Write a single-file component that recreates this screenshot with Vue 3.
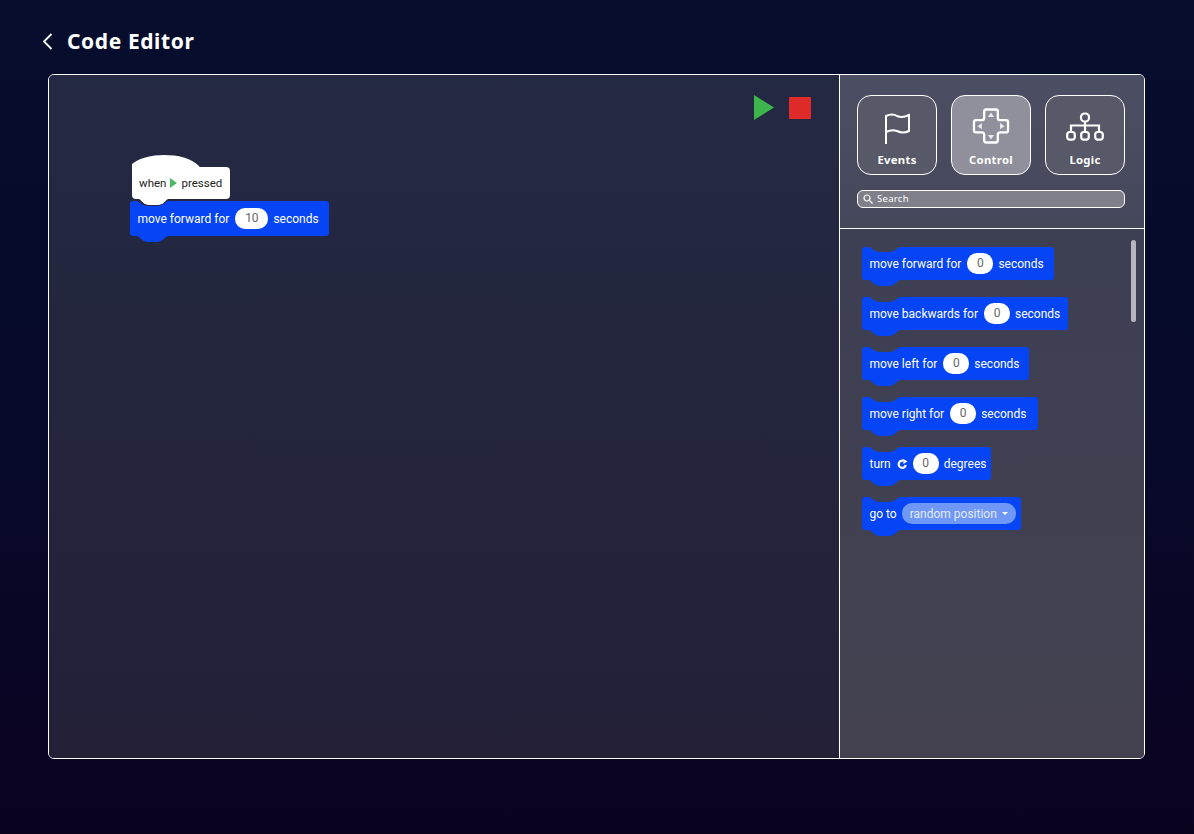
<script setup>
const tabs = [
  { name: 'Events', icon: 'flag' },
  { name: 'Control', icon: 'pad', active: true },
  { name: 'Logic', icon: 'tree' },
]

const blocks = [
  { before: 'move forward for', value: '0', after: 'seconds', width: 192 },
  { before: 'move backwards for', value: '0', after: 'seconds', width: 206 },
  { before: 'move left for', value: '0', after: 'seconds', width: 167 },
  { before: 'move right for', value: '0', after: 'seconds', width: 176 },
  { before: 'turn', turn: true, value: '0', after: 'degrees', width: 129 },
  { before: 'go to', select: 'random position', width: 159 },
]
</script>

<template>
  <div class="page">
    <header class="top">
      <svg class="back" width="11" height="17" viewBox="0 0 11 17">
        <path d="M9.5 1 L2 8.5 L9.5 16" fill="none" stroke="#fff" stroke-width="1.8" />
      </svg>
      <h1>Code Editor</h1>
    </header>

    <main class="editor">
      <section class="canvas">
        <div class="controls">
          <svg width="20" height="25" viewBox="0 0 20 25"><path d="M0 0 L20 12.5 L0 25 Z" fill="#3cb54a" /></svg>
          <span class="stop"></span>
        </div>

        <div class="stack">
          <div class="hat">
            <svg class="dome" width="68" height="13" viewBox="0 0 68 13"><path d="M0 13 V9 C7 3 20 0 32 0 C46 0 59 3 67 11 L68 13 Z" fill="#fff" /></svg>
            <span>when</span>
            <svg width="7" height="10" viewBox="0 0 7 10"><path d="M0 0 L7 5 L0 10 Z" fill="#4cb860" /></svg>
            <span>pressed</span>
          </div>
          <div class="block block-canvas">
            <span>move forward for</span>
            <span class="pill wide">10</span>
            <span>seconds</span>
          </div>
        </div>
      </section>

      <aside class="side">
        <div class="side-head">
          <div class="tabs">
            <button v-for="tab in tabs" :key="tab.name" class="tab" :class="{ active: tab.active }">
              <svg v-if="tab.icon === 'flag'" width="27" height="31" viewBox="0 0 27 31" fill="none" stroke="#fff" stroke-width="2">
                <path d="M2 31 V3 C6 1 10 1 13 3 C17 5 21 4 25 2 V18 C21 20 17 20 13 18 C10 17 6 17 2 19" />
              </svg>
              <svg v-else-if="tab.icon === 'pad'" width="38" height="36" viewBox="0 0 38 37" fill="none">
                <path d="M14 1.5 H24 Q26 1.5 26 3.5 V10 Q26 12.5 28.5 12.5 H34.5 Q36.5 12.5 36.5 14.5 V23 Q36.5 25 34.5 25 H28.5 Q26 25 26 27.5 V33.5 Q26 35.5 24 35.5 H14 Q12 35.5 12 33.5 V27.5 Q12 25 9.5 25 H3.5 Q1.5 25 1.5 23 V14.5 Q1.5 12.5 3.5 12.5 H9.5 Q12 12.5 12 10 V3.5 Q12 1.5 14 1.5 Z" stroke="#fff" stroke-width="2.4" />
                <path d="M19 4.5 L22.2 9.2 H15.8 Z M19 32.5 L15.8 27.8 H22.2 Z M5 18.7 L9.7 15.5 V21.9 Z M33 18.7 L28.3 21.9 V15.5 Z" fill="#e8e8ee" />
              </svg>
              <svg v-else width="38" height="36" viewBox="0 0 38 36" fill="none" stroke="#fff" stroke-width="2.2">
                <rect x="15" y="5.5" width="8" height="8" rx="3.6" />
                <path d="M19 13.5 V23 M5 23 V17.5 H33 V23" />
                <rect x="1.2" y="24" width="7.6" height="7.6" rx="2.6" />
                <rect x="15.2" y="24" width="7.6" height="7.6" rx="2.6" />
                <rect x="29.2" y="24" width="7.6" height="7.6" rx="2.6" />
              </svg>
              <span>{{ tab.name }}</span>
            </button>
          </div>
          <div class="search">
            <svg width="10" height="10" viewBox="0 0 10 10" fill="none" stroke="#fff" stroke-width="1.2">
              <circle cx="4" cy="4" r="3" />
              <path d="M6.2 6.2 L9.5 9.5" />
            </svg>
            <span>Search</span>
          </div>
        </div>

        <div class="palette">
          <div v-for="b in blocks" :key="b.before" class="block" :style="{ width: b.width + 'px' }">
            <span>{{ b.before }}</span>
            <svg v-if="b.turn" class="turn" width="11" height="10" viewBox="0 0 11 10" fill="none">
              <path d="M8.8 6 A3.6 3.6 0 1 1 6 1.7" stroke="#fff" stroke-width="2.2" />
              <path d="M6 0 L10.5 2.2 L6.5 5 Z" fill="#fff" />
            </svg>
            <span v-if="b.value" class="pill">{{ b.value }}</span>
            <span v-if="b.after">{{ b.after }}</span>
            <span v-if="b.select" class="select">
              {{ b.select }}
              <i class="caret"></i>
            </span>
          </div>
          <span class="scrollbar"></span>
        </div>
      </aside>
    </main>
  </div>
</template>

<style>
body {
  margin: 0;
  background: #0a0320;
}
</style>

<style scoped>
.page {
  box-sizing: border-box;
  width: 1194px;
  height: 834px;
  padding: 26px 49px 0 48px;
  overflow: hidden;
  background: linear-gradient(180deg, #060d2d 0%, #070a2a 50%, #0b0220 100%);
  font-family: Roboto, "Liberation Sans", sans-serif;
}
.top {
  display: flex;
  align-items: center;
  height: 30px;
  margin: 0 0 18px -6px;
  gap: 14px;
}
.top h1 {
  margin: 0;
  color: #fff;
  font-family: "Noto Sans", sans-serif;
  font-size: 21px;
  font-weight: 700;
  letter-spacing: 0.6px;
}
.editor {
  display: flex;
  height: 685px;
  box-sizing: border-box;
  border: 1px solid #fff;
  border-radius: 6px;
  overflow: hidden;
}
.canvas {
  position: relative;
  width: 790px;
  flex: none;
  border-right: 1px solid #fff;
  background: linear-gradient(180deg, #242943 0%, #232038 100%);
}
.controls {
  display: flex;
  justify-content: flex-end;
  align-items: center;
  gap: 15px;
  padding: 20px 28px 0 0;
}
.stop {
  width: 22px;
  height: 22px;
  background: #e02b2b;
}
.stack {
  position: absolute;
  left: 81px;
  top: 92px;
}
.hat {
  position: relative;
  display: flex;
  align-items: center;
  gap: 4px;
  box-sizing: border-box;
  width: 98px;
  height: 32px;
  margin-left: 2px;
  padding: 0 0 1px 7px;
  border-radius: 0 4px 4px 4px;
  background: #fff;
  color: #222;
  font-size: 11.5px;
}
.dome {
  position: absolute;
  left: 0;
  top: -12px;
}
.hat::after {
  content: '';
  position: absolute;
  z-index: 2;
  left: 7px;
  bottom: -6px;
  width: 29px;
  height: 6px;
  background: #fff;
  clip-path: path('M0 0 H29 C26 2 24 6 19 6 H10 C5 6 3 2 0 0 Z');
}
.block {
  position: relative;
  display: flex;
  align-items: center;
  gap: 5px;
  height: 33px;
  box-sizing: border-box;
  padding-left: 7.5px;
  border-radius: 3px;
  background: #0645f5;
  color: #fff;
  font-size: 12px;
  white-space: nowrap;
}
.block::before {
  content: '';
  position: absolute;
  left: 7px;
  top: 0;
  width: 31px;
  height: 5px;
  background: #3e4054;
  clip-path: path('M0 0 H31 C27 2 25 5 20 5 H11 C6 5 4 2 0 0 Z');
}
.block::after {
  content: '';
  position: absolute;
  left: 7px;
  bottom: -6px;
  width: 31px;
  height: 6px;
  background: #0645f5;
  clip-path: path('M0 0 H31 C27 2 25 6 20 6 H11 C6 6 4 2 0 0 Z');
}
.block-canvas {
  width: 199px;
  height: 35px;
  margin-top: 2px;
}
.block-canvas::before {
  background: #242843;
}
.pill {
  min-width: 26px;
  height: 21px;
  box-sizing: border-box;
  margin-left: 1px;
  border-radius: 10px;
  background: #fff;
  color: #666;
  font-size: 12px;
  line-height: 21px;
  text-align: center;
}
.pill.wide {
  min-width: 33px;
}
.select {
  display: flex;
  align-items: center;
  gap: 5px;
  width: 114px;
  height: 21px;
  box-sizing: border-box;
  padding-left: 8px;
  border-radius: 10px;
  background: #6f98f6;
  color: #e3eafd;
  font-size: 12px;
}
.caret {
  width: 0;
  height: 0;
  border-left: 3px solid transparent;
  border-right: 3px solid transparent;
  border-top: 3.5px solid #fff;
}
.turn {
  margin: 0 -1px 0 1px;
}
.side {
  flex: 1;
  display: flex;
  flex-direction: column;
  min-width: 0;
}
.side-head {
  height: 154px;
  box-sizing: border-box;
  padding: 20px 19px 0 17px;
  border-bottom: 1px solid #fff;
  background: linear-gradient(180deg, #4c4e63 0%, #45475b 100%);
}
.tabs {
  display: flex;
  gap: 14px;
}
.tab {
  display: flex;
  flex-direction: column;
  align-items: center;
  width: 80px;
  height: 80px;
  padding: 0;
  box-sizing: border-box;
  border: 1px solid #fff;
  border-radius: 14px;
  background: #575969;
  color: #fff;
  font-family: "Noto Sans", sans-serif;
  font-size: 11.3px;
  font-weight: 700;
  letter-spacing: 0.3px;
}
.tab svg {
  margin-top: auto;
}
.tab span {
  height: 16px;
  margin: 8px 0 6px;
  line-height: 16px;
}
.tab.active {
  background: #8f909c;
}
.search {
  display: flex;
  align-items: center;
  gap: 4px;
  height: 18px;
  box-sizing: border-box;
  margin-top: 15px;
  padding: 0 0 1px 5px;
  border: 1px solid #fff;
  border-radius: 6px;
  background: #7f808a;
  color: #fff;
  font-family: "Noto Sans", sans-serif;
  font-size: 9.5px;
  letter-spacing: 0.3px;
}
.palette {
  position: relative;
  flex: 1;
  display: flex;
  flex-direction: column;
  gap: 17px;
  padding: 18px 0 0 22px;
  background: linear-gradient(180deg, #3d3f53 0%, #43414f 100%);
}
.scrollbar {
  position: absolute;
  right: 8px;
  top: 11px;
  width: 5px;
  height: 82px;
  border-radius: 3px;
  background: #b6b6bd;
}
</style>
